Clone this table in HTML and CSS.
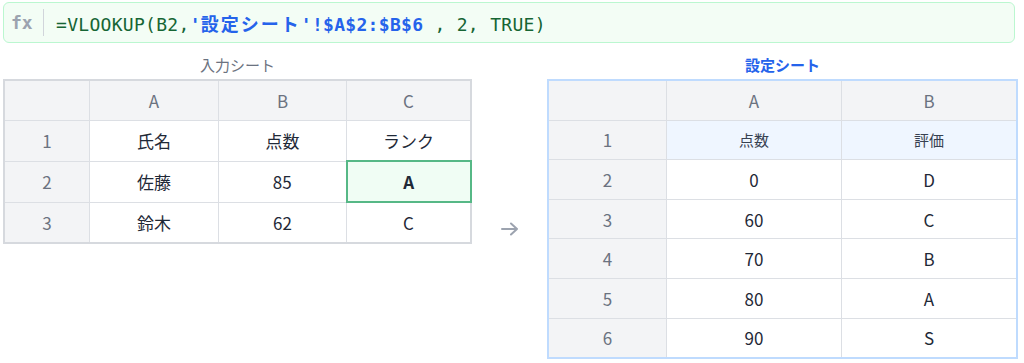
FILE: index.html
```html
<!DOCTYPE html>
<html lang="ja">
<head>
<meta charset="utf-8">
<link rel="stylesheet" href="styles.css">
</head>
<body>
<div class="fbar">
  <span class="fx">fx</span>
  <span class="sep"></span>
  <span class="formula">=VLOOKUP(B2,<b class="ref">'<span class="cjk">設定シート</span>'!$A$2:$B$6</b> , 2, TRUE)</span>
</div>
<div class="sheets">
  <section class="sheet sheet-left">
    <div class="title">入力シート</div>
    <table class="grid grid-left">
      <tr class="head"><td class="rn"></td><td>A</td><td>B</td><td>C</td></tr>
      <tr><td class="rn">1</td><td>氏名</td><td>点数</td><td>ランク</td></tr>
      <tr><td class="rn">2</td><td>佐藤</td><td>85</td><td class="sel">A</td></tr>
      <tr><td class="rn">3</td><td>鈴木</td><td>62</td><td>C</td></tr>
    </table>
  </section>
  <div class="arrow">
    <svg width="20" height="16" viewBox="0 0 20 16"><path d="M2 8 H17 M11 2.5 L17 8 L11 13.5" fill="none" stroke="#9ca3af" stroke-width="2" stroke-linecap="round" stroke-linejoin="round"/></svg>
  </div>
  <section class="sheet sheet-right">
    <div class="title title-blue">設定シート</div>
    <table class="grid grid-right">
      <tr class="head"><td class="rn"></td><td>A</td><td>B</td></tr>
      <tr class="hl"><td class="rn">1</td><td>点数</td><td>評価</td></tr>
      <tr><td class="rn">2</td><td>0</td><td>D</td></tr>
      <tr><td class="rn">3</td><td>60</td><td>C</td></tr>
      <tr><td class="rn">4</td><td>70</td><td>B</td></tr>
      <tr><td class="rn">5</td><td>80</td><td>A</td></tr>
      <tr><td class="rn">6</td><td>90</td><td>S</td></tr>
    </table>
  </section>
</div>
</body>
</html>
```
FILE: styles.css
```css
html, body {
  margin: 0;
  padding: 0;
  background: #ffffff;
}
body {
  font-family: "Noto Sans CJK JP", "Noto Sans", sans-serif;
  color: #1f2937;
}
.fbar {
  box-sizing: border-box;
  margin: 2px 9px 0 3px;
  height: 41px;
  border: 1px solid #bbf7d0;
  border-radius: 6px;
  background: #f3fdf5;
  display: flex;
  align-items: center;
  padding-left: 7px;
}
.fx {
  font-family: "DejaVu Sans Mono", monospace;
  font-weight: bold;
  font-size: 18px;
  color: #9ca3af;
  width: 24px;
}
.sep {
  width: 1px;
  height: 27px;
  background: #d1d5db;
  margin: 0 12px 0 8px;
}
.formula {
  font-family: "DejaVu Sans Mono", "Noto Sans CJK JP", monospace;
  font-size: 18px;
  letter-spacing: 0.3px;
  color: #166534;
  white-space: pre;
}
.ref {
  color: #2563eb;
  font-weight: bold;
}
.cjk {
  font-family: "Noto Sans CJK JP", sans-serif;
  letter-spacing: 2px;
}
.sheets {
  display: flex;
  align-items: flex-start;
  padding-left: 3px;
  margin-top: 12px;
}
.sheet {
  display: flex;
  flex-direction: column;
}
.title {
  font-size: 15px;
  line-height: 20px;
  height: 24px;
  text-align: center;
  color: #6b7280;
}
.title-blue {
  color: #2563eb;
  font-weight: bold;
}
.arrow {
  width: 75px;
  display: flex;
  justify-content: center;
  padding-top: 166px;
}
.arrow svg {
  display: block;
  margin-left: 1px;
}
.grid {
  border-collapse: collapse;
  table-layout: fixed;
}
.grid td {
  border: 1px solid #dcdfe4;
  text-align: center;
  padding: 0;
  font-size: 17px;
  color: #1f2937;
}
.grid .rn {
  background: #f3f4f6;
  color: #6b7280;
}
.grid .head td {
  background: #f3f4f6;
  color: #6b7280;
}
.grid-left {
  border: 2px solid #d6d9de;
  width: 469px;
}
.grid-left td {
  height: 39px;
}
.grid-left td:nth-child(1) { width: 84px; }
.grid-left td:nth-child(2) { width: 128px; }
.grid-left td:nth-child(3) { width: 127px; }
.grid-left td.sel {
  border: 2px solid #56b886;
  background: #f0fdf4;
  font-weight: bold;
}
.grid-right {
  border: 2px solid #bfdbfe;
  width: 471px;
}
.grid-right td {
  height: 38.6px;
}
.grid-right td:nth-child(1) { width: 117px; }
.grid-right td:nth-child(2) { width: 174px; }
.grid-right .hl td {
  background: #eff6ff;
  font-size: 15px;
  color: #374151;
}
.grid-right .hl td.rn {
  background: #f3f4f6;
  font-size: 17px;
  color: #6b7280;
}
```
